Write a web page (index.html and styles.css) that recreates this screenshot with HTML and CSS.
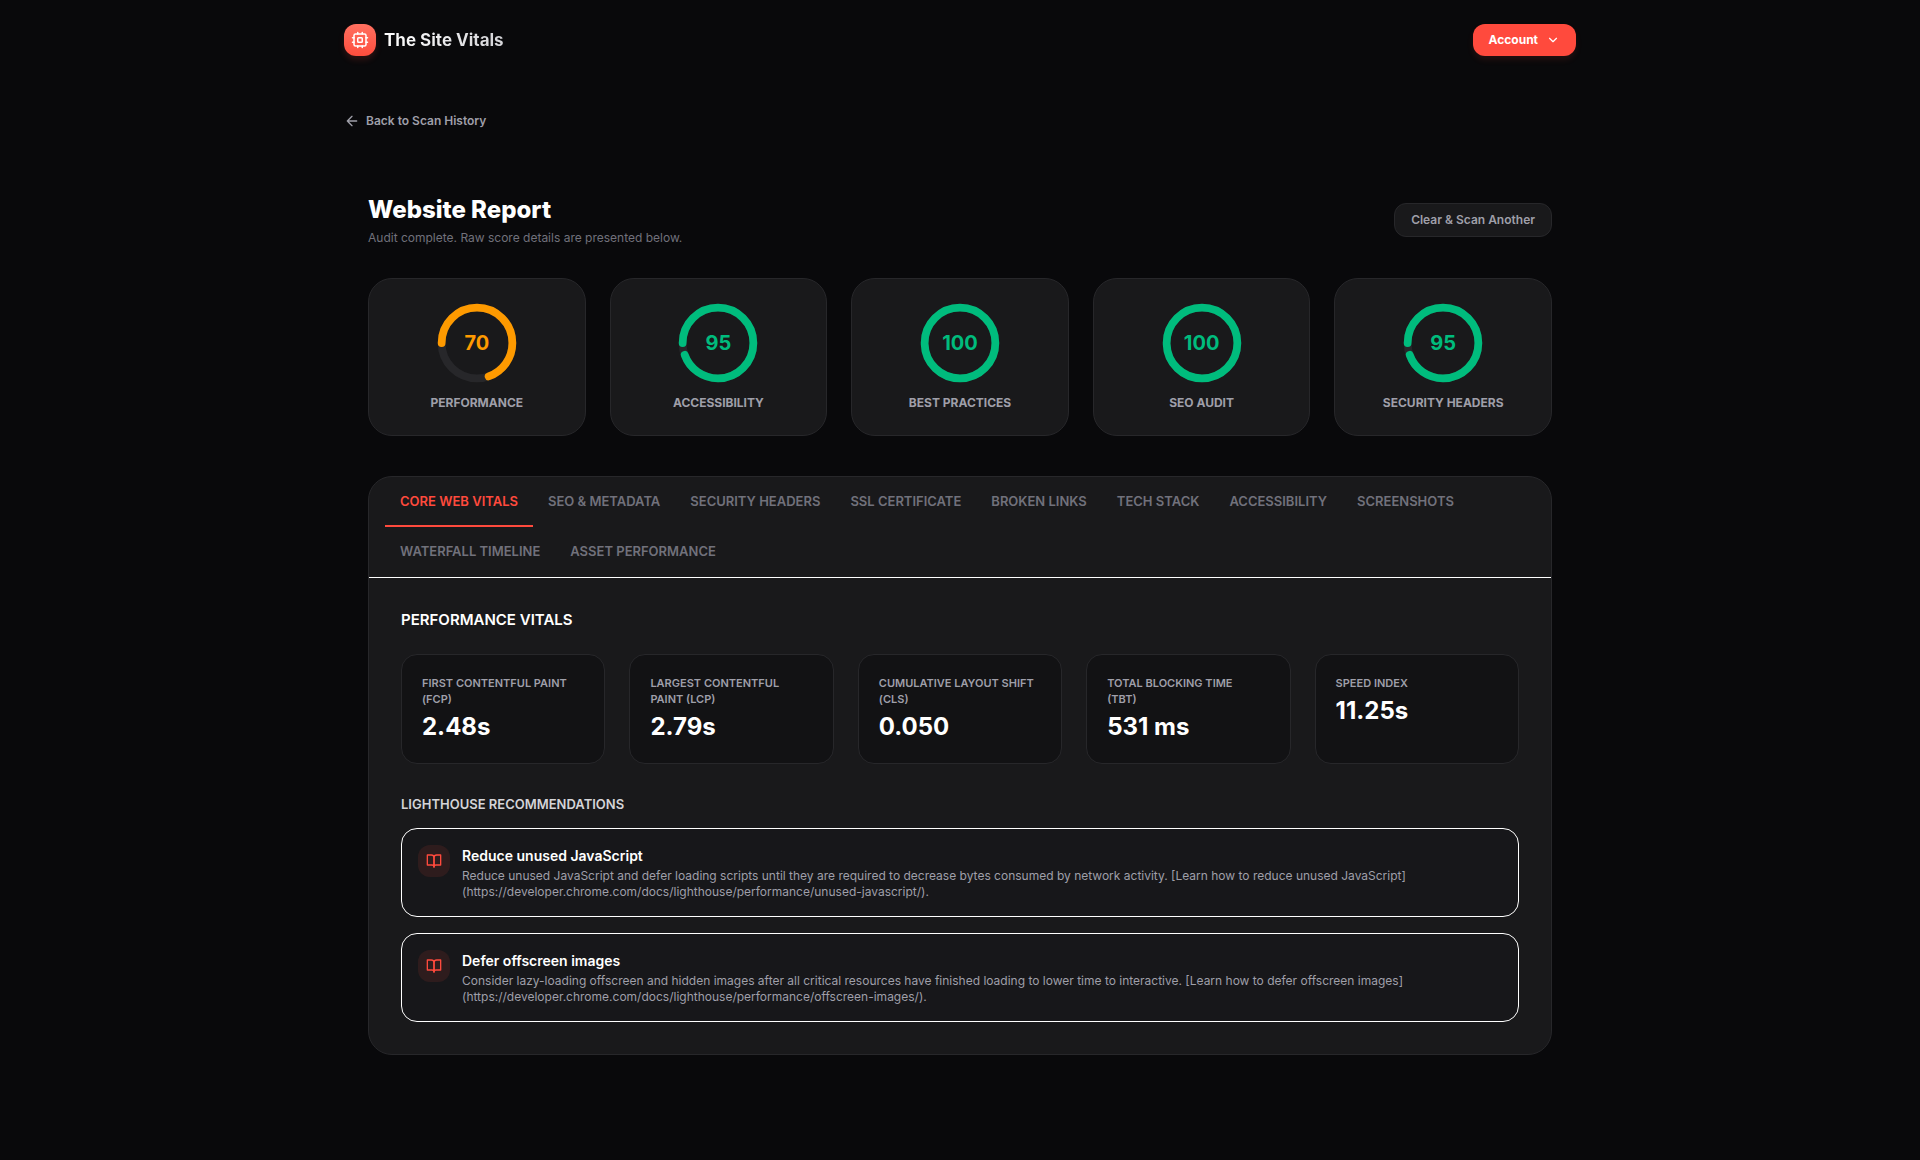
FILE: index.html
```html
<!DOCTYPE html>
<html lang="en">
<head>
  <meta charset="UTF-8" />
  <meta name="viewport" content="width=device-width, initial-scale=1.0" />
  <title>Website Report - The Site Vitals</title>
  <link rel="stylesheet" href="styles.css">
</head>
<body>
  <header class="site-header">
    <a href="#" class="brand">
      <span class="brand-icon">
        <svg width="18" height="18" viewBox="0 0 24 24" fill="none" stroke="currentColor" stroke-width="2" stroke-linecap="round" stroke-linejoin="round">
          <rect x="4" y="4" width="16" height="16" rx="2" />
          <rect x="9" y="9" width="6" height="6" rx="1" />
          <path d="M15 2v2M15 20v2M2 15h2M2 9h2M20 15h2M20 9h2M9 2v2M9 20v2" />
        </svg>
      </span>
      <span class="brand-name">The Site Vitals</span>
    </a>
    <button type="button" class="account-btn">
      Account
      <svg width="14" height="14" viewBox="0 0 24 24" fill="none" stroke="currentColor" stroke-width="2" stroke-linecap="round" stroke-linejoin="round"><path d="m6 9 6 6 6-6" /></svg>
    </button>
  </header>

  <main class="page">
    <a href="#" class="back-link">
      <svg width="16" height="16" viewBox="0 0 24 24" fill="none" stroke="currentColor" stroke-width="2" stroke-linecap="round" stroke-linejoin="round"><path d="m12 19-7-7 7-7M19 12H5" /></svg>
      Back to Scan History
    </a>

    <div class="report">
      <div class="report-head">
        <div>
          <h1>Website Report</h1>
          <p>Audit complete. Raw score details are presented below.</p>
        </div>
        <button type="button" class="clear-btn">Clear &amp; Scan Another</button>
      </div>

      <div class="scores">
        <div class="score-card average">
          <div class="gauge">
            <svg viewBox="0 0 36 36">
              <circle class="track" cx="18" cy="18" r="15.9155" />
              <circle class="value" cx="18" cy="18" r="15.9155" pathLength="100" stroke-dasharray="70 100" />
            </svg>
            <span>70</span>
          </div>
          <h2>PERFORMANCE</h2>
        </div>
        <div class="score-card good">
          <div class="gauge">
            <svg viewBox="0 0 36 36">
              <circle class="track" cx="18" cy="18" r="15.9155" />
              <circle class="value" cx="18" cy="18" r="15.9155" pathLength="100" stroke-dasharray="95 100" />
            </svg>
            <span>95</span>
          </div>
          <h2>ACCESSIBILITY</h2>
        </div>
        <div class="score-card good">
          <div class="gauge">
            <svg viewBox="0 0 36 36">
              <circle class="track" cx="18" cy="18" r="15.9155" />
              <circle class="value" cx="18" cy="18" r="15.9155" pathLength="100" stroke-dasharray="100 100" />
            </svg>
            <span>100</span>
          </div>
          <h2>BEST PRACTICES</h2>
        </div>
        <div class="score-card good">
          <div class="gauge">
            <svg viewBox="0 0 36 36">
              <circle class="track" cx="18" cy="18" r="15.9155" />
              <circle class="value" cx="18" cy="18" r="15.9155" pathLength="100" stroke-dasharray="100 100" />
            </svg>
            <span>100</span>
          </div>
          <h2>SEO AUDIT</h2>
        </div>
        <div class="score-card good">
          <div class="gauge">
            <svg viewBox="0 0 36 36">
              <circle class="track" cx="18" cy="18" r="15.9155" />
              <circle class="value" cx="18" cy="18" r="15.9155" pathLength="100" stroke-dasharray="95 100" />
            </svg>
            <span>95</span>
          </div>
          <h2>SECURITY HEADERS</h2>
        </div>
      </div>

      <section class="panel">
        <nav class="tabs">
          <button type="button" class="tab active">CORE WEB VITALS</button>
          <button type="button" class="tab">SEO &amp; METADATA</button>
          <button type="button" class="tab">SECURITY HEADERS</button>
          <button type="button" class="tab">SSL CERTIFICATE</button>
          <button type="button" class="tab">BROKEN LINKS</button>
          <button type="button" class="tab">TECH STACK</button>
          <button type="button" class="tab">ACCESSIBILITY</button>
          <button type="button" class="tab">SCREENSHOTS</button>
          <button type="button" class="tab">WATERFALL TIMELINE</button>
          <button type="button" class="tab">ASSET PERFORMANCE</button>
        </nav>

        <div class="panel-body">
          <h2>PERFORMANCE VITALS</h2>
          <div class="vitals">
            <div class="vital">
              <h3>FIRST CONTENTFUL PAINT (FCP)</h3>
              <p>2.48s</p>
            </div>
            <div class="vital">
              <h3>LARGEST CONTENTFUL PAINT (LCP)</h3>
              <p>2.79s</p>
            </div>
            <div class="vital">
              <h3>CUMULATIVE LAYOUT SHIFT (CLS)</h3>
              <p>0.050</p>
            </div>
            <div class="vital">
              <h3>TOTAL BLOCKING TIME<br>(TBT)</h3>
              <p>531 ms</p>
            </div>
            <div class="vital">
              <h3>SPEED INDEX</h3>
              <p>11.25s</p>
            </div>
          </div>

          <h3 class="rec-title">LIGHTHOUSE RECOMMENDATIONS</h3>
          <div class="recs">
            <article class="rec">
              <span class="rec-icon">
                <svg width="16" height="16" viewBox="0 0 24 24" fill="none" stroke="currentColor" stroke-width="2" stroke-linecap="round" stroke-linejoin="round"><path d="M2 3h6a4 4 0 0 1 4 4v14a3 3 0 0 0-3-3H2z" /><path d="M22 3h-6a4 4 0 0 0-4 4v14a3 3 0 0 1 3-3h7z" /></svg>
              </span>
              <div>
                <h4>Reduce unused JavaScript</h4>
                <p>Reduce unused JavaScript and defer loading scripts until they are required to decrease bytes consumed by network activity. [Learn how to reduce unused JavaScript](https://developer.chrome.com/docs/lighthouse/performance/unused-javascript/).</p>
              </div>
            </article>
            <article class="rec">
              <span class="rec-icon">
                <svg width="16" height="16" viewBox="0 0 24 24" fill="none" stroke="currentColor" stroke-width="2" stroke-linecap="round" stroke-linejoin="round"><path d="M2 3h6a4 4 0 0 1 4 4v14a3 3 0 0 0-3-3H2z" /><path d="M22 3h-6a4 4 0 0 0-4 4v14a3 3 0 0 1 3-3h7z" /></svg>
              </span>
              <div>
                <h4>Defer offscreen images</h4>
                <p>Consider lazy-loading offscreen and hidden images after all critical resources have finished loading to lower time to interactive. [Learn how to defer offscreen images](https://developer.chrome.com/docs/lighthouse/performance/offscreen-images/).</p>
              </div>
            </article>
          </div>
        </div>
      </section>
    </div>
  </main>
</body>
</html>
```

FILE: styles.css
```css
* {
  box-sizing: border-box;
  margin: 0;
  padding: 0;
}
body {
  background: #09090b;
  color: #fff;
  font-family: Inter, "Liberation Sans", sans-serif;
  font-size: 12px;
  line-height: 16px;
}
button {
  font: inherit;
  border: none;
  cursor: pointer;
}
a {
  text-decoration: none;
}
svg {
  display: block;
}

/* header */
.site-header {
  display: flex;
  align-items: center;
  justify-content: space-between;
  max-width: 1280px;
  margin: 0 auto;
  padding: 24px;
}
.brand {
  display: flex;
  align-items: center;
  gap: 8px;
}
.brand-icon {
  display: flex;
  align-items: center;
  justify-content: center;
  width: 32px;
  height: 32px;
  border-radius: 12px;
  background: linear-gradient(to top, #ff4d3d, #ff7060);
  color: #fff;
  box-shadow: 0 4px 6px rgba(255, 77, 61, 0.15);
}
.brand-name {
  font-size: 17px;
  line-height: 28px;
  font-weight: 700;
  background: linear-gradient(to right, #fff, #d4d4d8);
  background-clip: text;
  color: transparent;
}
.account-btn {
  display: flex;
  align-items: center;
  gap: 8px;
  height: 32px;
  padding: 0 16px;
  border-radius: 12px;
  background: #ff4a3d;
  color: #fff;
  font-weight: 700;
  box-shadow: 0 4px 6px rgba(255, 77, 61, 0.1);
}

/* page */
.page {
  max-width: 1280px;
  margin: 0 auto;
  padding: 32px 24px;
}
.back-link {
  display: flex;
  align-items: center;
  gap: 6px;
  width: fit-content;
  line-height: 18px;
  color: #9f9fa9;
  font-weight: 600;
}
.report {
  padding: 64px 24px 24px;
}
.report-head {
  display: flex;
  align-items: center;
  justify-content: space-between;
  margin-bottom: 32px;
}
.report-head h1 {
  font-size: 24px;
  line-height: 32px;
  font-weight: 800;
}
.report-head p {
  margin-top: 4px;
  color: #71717b;
}
.clear-btn {
  padding: 8px 16px;
  border: 1px solid #27272a;
  border-radius: 12px;
  background: #19191b;
  color: #9f9fa9;
  font-weight: 600;
}

/* scores */
.scores {
  display: grid;
  grid-template-columns: repeat(5, 1fr);
  gap: 24px;
  margin-bottom: 40px;
}
.score-card {
  display: flex;
  flex-direction: column;
  align-items: center;
  gap: 12px;
  padding: 24px;
  border: 1px solid #27272a;
  border-radius: 24px;
  background: #19191b;
}
.score-card h2 {
  font-size: 12px;
  font-weight: 700;
  color: #9f9fa9;
}
.gauge {
  display: grid;
  place-items: center;
  width: 80px;
  height: 80px;
}
.gauge svg,
.gauge span {
  grid-area: 1 / 1;
}
.gauge svg {
  width: 80px;
  height: 80px;
  transform: rotate(180deg);
}
.gauge circle {
  fill: none;
  stroke-width: 3.5;
}
.gauge .track {
  stroke: #27272a;
}
.gauge .value {
  stroke: currentColor;
  stroke-linecap: round;
}
.gauge span {
  font-size: 20px;
  line-height: 28px;
  font-weight: 700;
}
.average {
  color: #fe9a00;
}
.good {
  color: #00bc7d;
}

/* report panel */
.panel {
  border: 1px solid #27272a;
  border-radius: 24px;
  background: #19191b;
  overflow: hidden;
}
.tabs {
  display: flex;
  flex-wrap: wrap;
  padding: 0 16px;
  border-bottom: 1px solid #fff;
}
.tab {
  padding: 16px 15px;
  border-bottom: 2px solid transparent;
  background: none;
  color: #71717b;
  font-size: 13px;
  font-weight: 600;
}
.tab.active {
  border-color: #ff4a3d;
  color: #ff4a3d;
}
.panel-body {
  padding: 32px;
}
.panel-body h2 {
  margin-bottom: 24px;
  font-size: 15px;
  line-height: 20px;
  font-weight: 600;
}
.vitals {
  display: grid;
  grid-template-columns: repeat(5, 1fr);
  gap: 24px;
  margin-bottom: 32px;
}
.vital {
  padding: 20px;
  border: 1px solid #27272a;
  border-radius: 16px;
  background: #121214;
}
.vital h3 {
  font-size: 11px;
  font-weight: 600;
  color: #9f9fa9;
}
.vital p {
  margin-top: 4px;
  font-size: 24px;
  line-height: 32px;
  font-weight: 700;
}
.panel-body .rec-title {
  margin-bottom: 16px;
  font-size: 13px;
  font-weight: 600;
  color: #d4d4d8;
}
.recs {
  display: flex;
  flex-direction: column;
  gap: 16px;
}
.rec {
  display: flex;
  gap: 12px;
  padding: 16px;
  border: 1px solid #fff;
  border-radius: 16px;
  background: #17171a;
}
.rec-icon {
  display: flex;
  flex-shrink: 0;
  align-items: center;
  justify-content: center;
  width: 32px;
  height: 32px;
  border-radius: 12px;
  background: rgba(255, 74, 61, 0.1);
  color: #ff4a3d;
}
.rec h4 {
  font-size: 14px;
  line-height: 21px;
  font-weight: 600;
}
.rec p {
  margin-top: 2px;
  color: #9f9fa9;
}
```
